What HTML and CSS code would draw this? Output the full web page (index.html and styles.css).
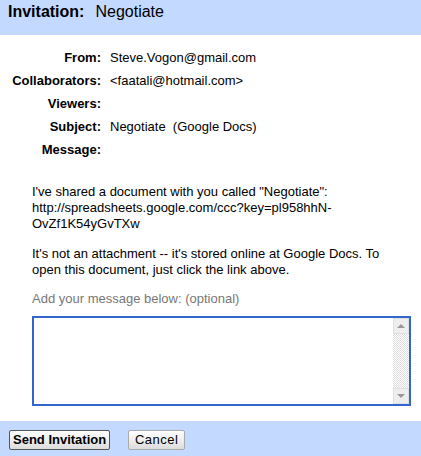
FILE: index.html
```html
<!DOCTYPE html>
<html>
<head>
<meta charset="utf-8">
<link rel="stylesheet" href="styles.css">
</head>
<body>
<div class="dialog">
  <div class="header"><span class="title-label">Invitation:</span><span class="title-value">Negotiate</span></div>
  <div class="fields">
    <div class="label">From:</div><div class="value">Steve.Vogon@gmail.com</div>
    <div class="label">Collaborators:</div><div class="value">&lt;faatali@hotmail.com&gt;</div>
    <div class="label">Viewers:</div><div class="value"></div>
    <div class="label">Subject:</div><div class="value">Negotiate&nbsp;&nbsp;(Google Docs)</div>
    <div class="label">Message:</div><div class="value"></div>
  </div>
  <div class="message">
    <p class="para-first">I've shared a document with you called "Negotiate":<br>http://spreadsheets.google.com/ccc?key=pl958hhN-<br>OvZf1K54yGvTXw</p>
    <p class="para-second">It's not an attachment -- it's stored online at Google Docs. To open this document, just click the link above.</p>
    <div class="hint">Add your message below: (optional)</div>
    <div class="textbox">
      <div class="textarea"></div>
      <div class="scrollbar">
        <div class="sb-btn"><span class="arrow-up"></span></div>
        <div class="sb-track"></div>
        <div class="sb-btn"><span class="arrow-down"></span></div>
      </div>
    </div>
  </div>
  <div class="footer">
    <button class="btn btn-primary">Send Invitation</button>
    <button class="btn btn-cancel">Cancel</button>
  </div>
</div>
</body>
</html>
```
FILE: styles.css
```css
html, body {
  margin: 0;
  padding: 0;
  background: #fff;
}
body {
  font-family: "Liberation Sans", Arial, sans-serif;
  font-size: 13px;
  color: #000;
  width: 421px;
  height: 456px;
  overflow: hidden;
}
.dialog {
  display: flex;
  flex-direction: column;
  height: 456px;
}
.header {
  background: #c3d9ff;
  height: 35px;
  box-sizing: border-box;
  padding: 3px 0 0 8px;
  font-size: 16px;
  line-height: 18px;
}
.title-label {
  font-weight: bold;
  margin-right: 11px;
}
.fields {
  display: grid;
  grid-template-columns: 101px 1fr;
  column-gap: 9px;
  grid-auto-rows: 23px;
  align-items: center;
  padding-top: 11px;
  line-height: 15px;
}
.label {
  text-align: right;
  font-weight: bold;
}
.message {
  padding: 23px 10px 0 32px;
  line-height: 16px;
}
.message p {
  margin: 0;
}
.para-first {
  margin-bottom: 14px !important;
}
.para-second {
  margin-bottom: 13px !important;
}
.hint {
  color: #777;
  margin-bottom: 9px;
}
.textbox {
  display: flex;
  height: 90px;
  box-sizing: border-box;
  border: 2px solid #3366cc;
  width: 379px;
}
.textarea {
  flex: 1;
}
.scrollbar {
  width: 16px;
  display: flex;
  flex-direction: column;
}
.sb-btn {
  height: 16px;
  box-sizing: border-box;
  background: #eeeeee;
  border: 1px solid #e0e0e0;
  display: flex;
  align-items: center;
  justify-content: center;
}
.sb-track {
  flex: 1;
  background-color: #fff;
  background-image: repeating-conic-gradient(#dcdcdc 0 25%, #ffffff 0 50%);
  background-size: 2px 2px;
}
.arrow-up {
  width: 0;
  height: 0;
  border-left: 4px solid transparent;
  border-right: 4px solid transparent;
  border-bottom: 4px solid #999;
}
.arrow-down {
  width: 0;
  height: 0;
  border-left: 4px solid transparent;
  border-right: 4px solid transparent;
  border-top: 4px solid #999;
}
.footer {
  margin-top: auto;
  background: #c3d9ff;
  height: 35px;
  display: flex;
  align-items: center;
  gap: 18px;
  padding-left: 9px;
  padding-top: 2px;
  box-sizing: border-box;
}
.btn {
  font-family: "Liberation Sans", Arial, sans-serif;
  font-size: 13px;
  height: 20px;
  padding: 0 3px;
  border: 1px solid #888;
  border-radius: 2px;
  background: linear-gradient(#ffffff, #dcdcdc);
  color: #000;
  line-height: 16px;
  white-space: nowrap;
}
.btn-primary {
  font-weight: bold;
  border-color: #555;
}
.btn-cancel {
  width: 57px;
  border-color: #aaa;
  letter-spacing: 0.5px;
}
```
